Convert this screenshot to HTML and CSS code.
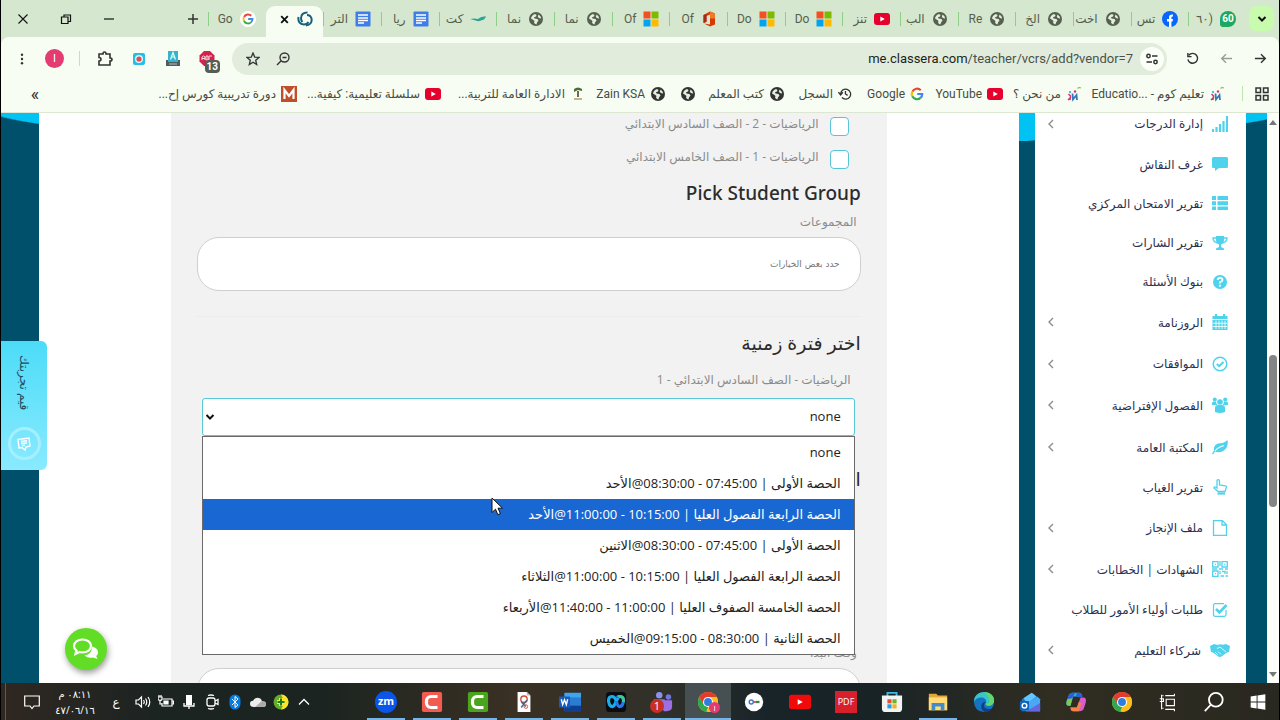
FILE: index.html
```
<!DOCTYPE html>
<html lang="ar" dir="rtl">
<head>
    <meta charset="UTF-8">
    <meta name="viewport" content="width=device-width, initial-scale=1.0">
    <title>Classera</title>
    <link rel="stylesheet" href="styles.css">
</head>
<body>
    <svg class="sprite" aria-hidden="true">
        <symbol id="globe" viewBox="0 0 16 16">
            <circle cx="8" cy="8" r="7" fill="currentColor"/>
            <path d="M3 7.500Q3.500 4 7 3l1.500 1L8 5.500l-2 .7.500 1.300 3 .5 1 1.500L9 11.500 8.500 13.500Q6.500 13 6 11.500L6.500 10 5 8.800zM10.500 3.500Q13 5 13.200 7.500L11.500 7.200 9.800 6z" fill="#e3eedd"/>
        </symbol>
        <symbol id="youtube" viewBox="0 0 16 16">
            <rect x="0" y="2" width="16" height="12" rx="3" fill="#e6002d"/>
            <path d="m6.300 5.500 4.500 2.500-4.500 2.500z" fill="#fff"/>
        </symbol>
        <symbol id="microsoft" viewBox="0 0 16 16">
            <path d="M.5 .5h7v7h-7z" fill="#f25022"/><path d="M8.500 .5h7v7h-7z" fill="#7fba00"/>
            <path d="M.5 8.500h7v7h-7z" fill="#00a4ef"/><path d="M8.500 8.500h7v7h-7z" fill="#ffb900"/>
        </symbol>
        <symbol id="docs" viewBox="0 0 16 16">
            <rect x=".5" y=".5" width="15" height="15" rx="1" fill="#3f7de8"/>
            <path d="M3 4h10M3 7h10M3 9.500h10M3 12h6" stroke="#fff" stroke-width="1.400"/>
        </symbol>
        <symbol id="google" viewBox="0 0 16 16">
            <g fill="none" stroke-width="2.500">
                <path d="M12.300 3.700A6 6 0 0 0 2.700 5.300" stroke="#ea4335"/>
                <path d="M2.700 5.300a6 6 0 0 0 0 5.400" stroke="#fbbc05"/>
                <path d="M2.700 10.700a6 6 0 0 0 9.300 1.800" stroke="#34a853"/>
                <path d="M12 12.500A6 6 0 0 0 14 8H8.300" stroke="#4285f4"/>
            </g>
        </symbol>
        <symbol id="madrasati" viewBox="0 0 16 16">
            <path d="m2.500 8 2 2-.5 4M2 14l3-3" stroke="#d6336c" stroke-width="1.500" fill="none"/>
            <path d="m6.500 7.500.5 6 3.500-4.500.5 5" stroke="#3578b8" stroke-width="1.800" fill="none"/>
            <circle cx="4" cy="6" r="1" fill="#29a3d6"/><circle cx="9" cy="5.500" r="1.200" fill="#d6336c"/>
            <path d="m11.500 2.500 1.500-1 2 .5" stroke="#8dc63f" stroke-width="1.200" fill="none"/>
        </symbol>
        <symbol id="chrome" viewBox="0 0 24 24">
            <circle cx="12" cy="12" r="11" fill="#fbc116"/>
            <path d="M2.500 6.500A11 11 0 0 1 21.500 6.500H12L7 15z" fill="#e33b2e"/>
            <path d="M2.500 6.500 7.200 14.700 12 17.500 10 22.800A11 11 0 0 1 2.500 6.500z" fill="#2da94f"/>
            <path d="M21.500 6.500H12l5 8-5 8.500A11 11 0 0 0 21.500 6.500z" fill="#fbc116"/>
            <circle cx="12" cy="12" r="5.500" fill="#fff"/><circle cx="12" cy="12" r="4.300" fill="#2f7de1"/>
        </symbol>
        <symbol id="camtasia" viewBox="0 0 24 24">
            <rect x="1" y="1" width="22" height="22" rx="2" fill="currentColor"/>
            <path d="M18 6h-7a5 5 0 0 0-5 5v2a5 5 0 0 0 5 5h7" fill="none" stroke="#fff" stroke-width="3.500"/>
        </symbol>
        <symbol id="chevron" viewBox="0 0 8 10">
            <path d="M6 1 2 5l4 4" fill="none" stroke="currentColor" stroke-width="1.400"/>
        </symbol>
    </svg>

    <header class="browser">
        <div class="tab-strip">
            <button class="tab-search" aria-label="Search tabs"><svg viewBox="0 0 12 12"><path d="m2.500 4 3.500 3.500L9.500 4" fill="none" stroke="currentColor" stroke-width="2"/></svg></button>
            <div class="tabs" role="tablist">
                <button class="tab" role="tab"><span class="badge-60">60</span><span class="tab-title">(٦٠</span></button>
                <button class="tab" role="tab"><svg viewBox="0 0 16 16"><circle cx="8" cy="8" r="8" fill="#0866ff"/><path d="M7 16v-5.500H5V8h2V6.500C7 4.300 8.200 3.200 11 3.500v2.100C9.600 5.500 9.400 6 9.400 7v1H11l-.4 2.500H9.400V16z" fill="#fff"/></svg><span class="tab-title">تس</span></button>
                <button class="tab" role="tab"><svg><use href="#globe"/></svg><span class="tab-title">اخت</span></button>
                <button class="tab" role="tab"><svg><use href="#globe"/></svg><span class="tab-title">الخ</span></button>
                <button class="tab" role="tab"><svg><use href="#globe"/></svg><span class="tab-title">Re</span></button>
                <button class="tab" role="tab"><svg><use href="#globe"/></svg><span class="tab-title">الب</span></button>
                <button class="tab" role="tab"><svg><use href="#youtube"/></svg><span class="tab-title">تنز</span></button>
                <button class="tab" role="tab"><svg><use href="#microsoft"/></svg><span class="tab-title">Do</span></button>
                <button class="tab" role="tab"><svg><use href="#microsoft"/></svg><span class="tab-title">Do</span></button>
                <button class="tab" role="tab"><svg viewBox="0 0 16 16"><path d="m9 .5 5 2v11l-5 2-6-3 6 1V3.500L5.500 5v5.500L2.500 12V4z" fill="#d83b01"/><path d="m9 .5 5 2v5H9z" fill="#f0772b"/><path d="M2.500 4 5.500 3v8L2.500 12z" fill="#a52a1c"/></svg><span class="tab-title">Of</span></button>
                <button class="tab" role="tab"><svg><use href="#microsoft"/></svg><span class="tab-title">Of</span></button>
                <button class="tab" role="tab"><svg><use href="#globe"/></svg><span class="tab-title">نما</span></button>
                <button class="tab" role="tab"><svg><use href="#globe"/></svg><span class="tab-title">نما</span></button>
                <button class="tab" role="tab"><svg viewBox="0 0 16 16"><path d="M0 8q4-1 8 0 3-3 7-2.500L16 5q-1 4-5 4.500Q8 11 4 9z" fill="#2aa596"/></svg><span class="tab-title">كت</span></button>
                <button class="tab" role="tab"><svg><use href="#docs"/></svg><span class="tab-title">ريا</span></button>
                <button class="tab" role="tab"><svg><use href="#docs"/></svg><span class="tab-title">التر</span></button>
                <button class="tab active" role="tab" aria-selected="true" aria-label="Classera"><svg viewBox="0 0 16 16" fill="none" stroke="#17607c" stroke-width="2"><path d="M10.500 1.500Q4 1.500 4 7.500q0 2 1.500 3.500"/><path d="M1.500 6q-1 7 5.500 7.500 3 0 4.500-2.500" /><path d="M9 14.500q6.500-1 5.500-7Q13.500 4 10 4"/></svg><svg class="tab-close" viewBox="0 0 10 10"><path d="m2 2 6 6M8 2 2 8" stroke="#111" stroke-width="1.700"/></svg></button>
                <button class="tab" role="tab"><span class="google-disc"><svg><use href="#google"/></svg></span><span class="tab-title">Go</span></button>
            </div>
            <button class="icon-btn" aria-label="New tab"><svg viewBox="0 0 12 12"><path d="M6 1v10M1 6h10" stroke="currentColor" stroke-width="1.500"/></svg></button>
            <div class="window-controls">
                <button class="icon-btn" aria-label="Minimize"><svg viewBox="0 0 12 12"><path d="M1 6h10" stroke="#111" stroke-width="1.200"/></svg></button>
                <button class="icon-btn" aria-label="Restore"><svg viewBox="0 0 12 12" fill="none" stroke="#111" stroke-width="1.200"><path d="M1.500 4h6.500v6.500H1.500zM4 4V2h6.500v6.500H8"/></svg></button>
                <button class="icon-btn" aria-label="Close"><svg viewBox="0 0 12 12"><path d="m1.500 1.500 9 9M10.500 1.500l-9 9" stroke="#111" stroke-width="1.100"/></svg></button>
            </div>
        </div>

        <div class="toolbar">
            <button class="nav-btn" aria-label="Back"><svg viewBox="0 0 14 14"><path d="M1 7h11M7.500 2.300 12.200 7l-4.700 4.700" fill="none" stroke="#333" stroke-width="1.500"/></svg></button>
            <button class="nav-btn" aria-label="Forward"><svg viewBox="0 0 14 14"><path d="M13 7H2M6.500 2.300 1.800 7l4.700 4.700" fill="none" stroke="#999f98" stroke-width="1.500"/></svg></button>
            <button class="nav-btn" aria-label="Reload"><svg viewBox="0 0 14 14"><path d="M3 3.500a5.300 5.300 0 1 1-1 4.500M2 1v4h4" fill="none" stroke="#333" stroke-width="1.500"/></svg></button>
            <div class="address-bar">
                <button class="site-info" aria-label="Site information"><svg viewBox="0 0 14 14" fill="none" stroke="#333" stroke-width="1.500"><circle cx="3.500" cy="4" r="1.700"/><path d="M7 4h5.500M1.500 10H7"/><circle cx="10.500" cy="10" r="1.700"/></svg></button>
                <a class="url" dir="ltr" href="#"><span>me.classera.com</span>/teacher/vcrs/add?vendor=7</a>
                <button class="icon-btn" aria-label="Zoom"><svg viewBox="0 0 14 14" fill="none" stroke="#333" stroke-width="1.400"><circle cx="8.500" cy="5.500" r="4.500"/><path d="M5.200 8.800 1 13M6.500 5.500h4"/></svg></button>
                <button class="icon-btn" aria-label="Bookmark"><svg viewBox="0 0 14 14"><path d="m7 1 1.700 4.100 4.300.3-3.300 2.800 1 4.300L7 10.200l-3.700 2.300 1-4.300L1 5.400l4.300-.3z" fill="none" stroke="#333" stroke-width="1.300"/></svg></button>
            </div>
            <div class="extensions">
                <button class="ext" aria-label="Ad blocker"><svg viewBox="0 0 16 16"><path d="M5 0h6l4.500 4.500v6L11 15H5L.5 10.500v-6z" fill="#d3224e"/><path d="M3 9V6l1.500-1L6 6v3M7 9V5h2v4zm3 0V5h3M3 7.500h3" stroke="#ffd5df" fill="none"/></svg><span class="ext-count">13</span></button>
                <button class="ext" aria-label="Translate"><svg viewBox="0 0 16 16"><path d="M1 9h14v6H1z" fill="#4e5d62"/><path d="M3 0h10v11H3z" fill="#35b5cb"/><path d="m5.500 8.500 2.500-7 2.500 7M6.500 6h3" stroke="#e8ffff" stroke-width="1.200" fill="none"/><path d="M4 13h8" stroke="#b3c0c0"/></svg></button>
                <button class="ext" aria-label="Screen recorder"><svg viewBox="0 0 16 16"><rect x="2" y="2" width="12" height="12" rx="2" fill="#27bde4"/><circle cx="8" cy="8" r="4" fill="#d9f5ff"/><circle cx="8" cy="8" r="2.600" fill="#df4d50"/></svg></button>
                <button class="ext" aria-label="Extensions"><svg viewBox="0 0 16 16"><path d="M2 3h4q0-2 1.500-2T9 3h4v4q2 0 2 1.500T13 10v4H2v-4q2 0 2-1.700T2 6.500z" fill="none" stroke="#333" stroke-width="1.600"/></svg></button>
                <span class="divider"></span>
                <button class="profile" aria-label="Profile">I</button>
                <button class="icon-btn" aria-label="Menu"><svg viewBox="0 0 14 14" fill="#333"><circle cx="7" cy="2" r="1.400"/><circle cx="7" cy="7" r="1.400"/><circle cx="7" cy="12" r="1.400"/></svg></button>
            </div>
        </div>

        <nav class="bookmarks">
            <button class="icon-btn apps" aria-label="Apps"><svg viewBox="0 0 14 14" fill="none" stroke="#333" stroke-width="1.500"><path d="M1 1h4.500v4.500H1zM8.500 1H13v4.500H8.500zM1 8.500h4.500V13H1zM8.500 8.500H13V13H8.500z"/></svg></button>
            <span class="divider"></span>
            <a href="#"><svg><use href="#madrasati"/></svg><span>تعليم كوم - Educatio...&lrm;</span></a>
            <a href="#"><svg><use href="#madrasati"/></svg><span>من نحن ؟</span></a>
            <a href="#"><svg><use href="#youtube"/></svg><span>YouTube</span></a>
            <a href="#"><svg class="small"><use href="#google"/></svg><span>Google</span></a>
            <a href="#"><svg class="small" viewBox="0 0 16 16" fill="none" stroke="#333" stroke-width="1.500"><path d="M3 8a5.700 5.700 0 1 1 1.500 4M.5 6 3 9l2.500-3M8.500 4.500V8l2.500 1.500"/></svg><span>السجل</span></a>
            <a href="#"><svg><use href="#globe"/></svg><span>كتب المعلم</span></a>
            <a href="#" aria-label="Bookmark"><svg><use href="#globe"/></svg></a>
            <a href="#"><svg><use href="#globe"/></svg><span>Zain KSA</span></a>
            <a href="#"><svg viewBox="0 0 16 16"><path d="M4 3q4-3 8 0v2L8 4 4 6z" fill="#4b6e36"/><path d="M7 5h2v6H7z" fill="#6c665b"/><path d="M4 13h8" stroke="#c5b38d" stroke-width="2"/></svg><span>الادارة العامة للتربية...</span></a>
            <a href="#"><svg><use href="#youtube"/></svg><span>سلسلة تعليمية: كيفية...</span></a>
            <a href="#"><svg viewBox="0 0 16 16"><path d="M0 0h16v16H0z" fill="#c04e2b"/><path d="M3.500 13V4L8 10l4.500-6v9" fill="none" stroke="#fff" stroke-width="2.200"/></svg><span>دورة تدريبية كورس إح...</span></a>
            <button class="more" aria-label="More bookmarks">»</button>
        </nav>
    </header>

    <div class="viewport">
        <div class="page">
            <aside class="sidebar">
                <ul>
                    <li class="parent"><a href="#"><svg viewBox="0 0 16 16"><path d="M1 16v-3M4.500 16v-5M8 16V8M11.500 16V5M15 16V0" stroke="currentColor" stroke-width="2.200"/></svg><span>إدارة الدرجات</span><svg class="arrow"><use href="#chevron"/></svg></a></li>
                    <li><a href="#"><svg viewBox="0 0 16 16"><path d="M1.500 1h13Q16 1 16 2.500v8q0 1.500-1.500 1.500H7l-4 3v-3H1.500Q0 12 0 10.500v-8Q0 1 1.500 1z" fill="currentColor"/></svg><span>غرف النقاش</span></a></li>
                    <li><a href="#"><svg viewBox="0 0 16 16"><path d="M0 1h4v4H0zm5.500 0H16v4H5.500zM0 6.200h4v4H0zm5.500 0H16v4H5.500zM0 11.500h4V15H0zm5.500 0H16V15H5.500z" fill="currentColor"/></svg><span>تقرير الامتحان المركزي</span></a></li>
                    <li><a href="#"><svg viewBox="0 0 16 16"><path d="M4 1h8v4q0 3-3 4.500v2.500l3 1.500V15H4v-1.500L7 12V9.500Q4 8 4 5z" fill="currentColor"/><path d="M4.500 3H1q0 4 4.500 5M11.500 3H15q0 4-4.500 5" fill="none" stroke="currentColor" stroke-width="1.300"/></svg><span>تقرير الشارات</span></a></li>
                    <li><a href="#"><svg viewBox="0 0 16 16"><circle cx="8" cy="8" r="7" fill="currentColor"/><path d="M5.700 6q0-2.200 2.400-2.200T10.500 6Q10.500 7.200 8 8.200V9.500M8 10.700v2" fill="none" stroke="#fff" stroke-width="1.800"/></svg><span>بنوك الأسئلة</span></a></li>
                    <li class="parent"><a href="#"><svg viewBox="0 0 16 16"><path d="M.5 2h15v3H.5zM3 0h2v3H3zM11 0h2v3h-2zM.5 6h15v10H.5z" fill="currentColor"/><path d="M1 9.300h14M1 12.500h14M4 6.500V15M7 6.500V15M10 6.500V15M13 6.500V15" stroke="#fff" stroke-width=".8"/></svg><span>الروزنامة</span><svg class="arrow"><use href="#chevron"/></svg></a></li>
                    <li class="parent"><a href="#"><svg viewBox="0 0 16 16" fill="none" stroke="currentColor"><circle cx="8" cy="8" r="6.800" stroke-width="1.500"/><path d="m4.800 8 2.400 2.200L11.500 6" stroke-width="2"/></svg><span>الموافقات</span><svg class="arrow"><use href="#chevron"/></svg></a></li>
                    <li class="parent"><a href="#"><svg viewBox="0 0 16 16" fill="currentColor"><circle cx="2.800" cy="2.500" r="2"/><circle cx="13.200" cy="2.500" r="2"/><circle cx="8" cy="5" r="2.800"/><path d="M3 15v-4q0-3 3-3h4q3 0 3 3v4q-5 2-10 0zM0 8V6q0-1.500 2-1.500h2q0 2 1.500 3.500zM16 8V6q0-1.500-2-1.500h-2Q12 6.500 10.500 8z"/></svg><span>الفصول الإفتراضية</span><svg class="arrow"><use href="#chevron"/></svg></a></li>
                    <li class="parent"><a href="#"><svg viewBox="0 0 16 16"><path d="M15.500 1Q17 9 10.500 12.500 6 14 3 12.500L1 15.500 0 14.500 2 11.500Q1 6.500 6 4.500 12 4.500 15.500 1z" fill="currentColor"/><path d="M3 12Q6 8 12 6.500" fill="none" stroke="#fff" stroke-width="1.100"/></svg><span>المكتبة العامة</span><svg class="arrow"><use href="#chevron"/></svg></a></li>
                    <li><a href="#"><svg viewBox="0 0 16 16" fill="none" stroke="currentColor" stroke-width="1.300"><path d="M5 9V2q0-1.300 1.200-1.300T7.500 2v4l6 .8q1 0 1 1.200l-1.500 4.500H6L2 9q0-1.500 1.500-1z"/><path d="M5.500 14.500H13" stroke-width="2.200"/></svg><span>تقرير الغياب</span></a></li>
                    <li class="parent"><a href="#"><svg viewBox="0 0 16 16" fill="none" stroke="currentColor" stroke-width="1.300"><path d="M1.500 .7h9l4 4v10.600h-13zM10 .7V5h4.500"/></svg><span>ملف الإنجاز</span><svg class="arrow"><use href="#chevron"/></svg></a></li>
                    <li class="parent"><a href="#"><svg viewBox="0 0 16 16" fill="none" stroke="currentColor" stroke-width="1.300"><path d="M.7 .7H6V6H.7zM10 .7h5.300V6H10zM.7 10H6v5.300H.7zM3 3.300h1M12.200 3.300h1M3 12.700h1M8 0v5M0 8h5M7 8h4M13 8h3M8 10v3M10 10.500h3V13M8.500 15H12M15 10v3M13.500 15H16"/></svg><span>الشهادات | الخطابات</span><svg class="arrow"><use href="#chevron"/></svg></a></li>
                    <li><a href="#"><svg viewBox="0 0 16 16" fill="none" stroke="currentColor"><path d="M14 8v4.500q0 1.800-1.800 1.800H3.300q-1.800 0-1.800-1.800v-9q0-1.800 1.800-1.800H12" stroke-width="1.200"/><path d="m4 7 3.500 3.500L14.500 3" stroke-width="2.600"/></svg><span>طلبات أولياء الأمور للطلاب</span></a></li>
                    <li class="parent"><a href="#"><svg class="wide" viewBox="0 0 20 16"><path d="M0 4 4 2l3.500 1L10 2.300l3 .5L16 2l4 2-1 6-2 .5-5.500 4q-2 1-4-.5L3 10.500 1 10z" fill="currentColor"/><path d="M7 6.500 10 5l6 5M5 10l3 3M8 9.500l3 3" stroke="#fff" stroke-width=".8" fill="none"/></svg><span>شركاء التعليم</span><svg class="arrow"><use href="#chevron"/></svg></a></li>
                </ul>
            </aside>

            <main>
                <form class="panel">
                    <label class="check-row"><input type="checkbox"><span>الرياضيات - 2 - الصف السادس الابتدائي</span></label>
                    <label class="check-row"><input type="checkbox"><span>الرياضيات - 1 - الصف الخامس الابتدائي</span></label>

                    <h2>Pick Student Group</h2>
                    <label class="field-label" for="groups">المجموعات</label>
                    <input class="round-input" type="text" id="groups" placeholder="حدد بعض الخيارات">
                    <hr>

                    <h2>اختر فترة زمنية</h2>
                    <div class="period">
                        <label class="field-label" for="period">الرياضيات - الصف السادس الابتدائي - 1</label>
                        <div class="select-wrap">
                            <select id="period"><option>none</option></select>
                            <svg class="caret" viewBox="0 0 10 10"><path d="m1.500 3 3.500 3.500L8.500 3" fill="none" stroke="#111" stroke-width="2"/></svg>
                            <ul class="options" role="listbox">
                                <li role="option">none</li>
                                <li role="option">الحصة الأولى | 07:45:00 - 08:30:00@الأحد</li>
                                <li role="option" class="highlighted" aria-selected="true">الحصة الرابعة الفصول العليا | 10:15:00 - 11:00:00@الأحد</li>
                                <li role="option">الحصة الأولى | 07:45:00 - 08:30:00@الاثنين</li>
                                <li role="option">الحصة الرابعة الفصول العليا | 10:15:00 - 11:00:00@الثلاثاء</li>
                                <li role="option">الحصة الخامسة الصفوف العليا | 11:00:00 - 11:40:00@الأربعاء</li>
                                <li role="option">الحصة الثانية | 08:30:00 - 09:15:00@الخميس</li>
                            </ul>
                        </div>
                    </div>
                    <h2 class="next-title">ا</h2>
                    <label class="field-label" for="start">وقت البدا</label>
                    <input class="round-input" type="text" id="start">
                </form>
            </main>

            <button class="feedback">
                <span class="feedback-text">قيم تجربتك</span>
                <span class="feedback-icon"><svg viewBox="0 0 16 16" fill="none" stroke="#fff" stroke-width="1.400"><path d="M2 3.500 13 2l1 8-4 1-1 3-3-2.500-3 .5zM5 5.500l6-.7M5 7.500l6-.5M6 9.500l3-.3"/></svg></span>
            </button>
            <button class="chat" aria-label="Chat"><svg viewBox="0 0 28 24"><path d="M20 9.500q6 1.500 6 6 0 2-1.800 3.500l1.300 3-4.500-1.500q-5 1-8.500-2 7.500-1 7.500-9z" fill="#fff"/><path d="M10.500 2.500c-5 0-8.500 2.800-8.500 6.500 0 2 1 3.500 2.500 4.600L3.500 17l4.200-2q1.300.4 2.800.4c5 0 8.500-2.700 8.500-6.400s-3.500-6.500-8.500-6.500z" fill="none" stroke="#fff" stroke-width="2.200"/></svg></button>
            <svg class="pointer" viewBox="0 0 12 20"><path d="M1 1v14.500l3.500-3.300 2.300 5.500 2.600-1.100L7 11.200h4.500z" fill="#fff" stroke="#111"/></svg>
        </div>
        <div class="scrollbar"><span class="scroll-up"></span><span class="thumb"></span><span class="scroll-down"></span></div>
    </div>

    <footer class="taskbar">
        <div class="apps-list">
            <button class="start" aria-label="Start"><svg viewBox="0 0 24 24"><path d="m4 6 6.500-1v6.500H4zM11.500 4.800 20 3.500v8h-8.500zM4 12.500h6.500V19L4 18zM11.500 12.500H20v8l-8.500-1.300z" fill="#fff"/></svg></button>
            <button aria-label="Search"><svg viewBox="0 0 24 24" fill="none" stroke="#fff" stroke-width="2"><circle cx="14" cy="9.500" r="7.500"/><path d="M8.500 15 2 22"/></svg></button>
            <button aria-label="Task view"><svg viewBox="0 0 24 24" fill="none" stroke="#fff" stroke-width="1.200"><path d="M10 9h9v7h-9zM9 5h10V3M9 20h10v2M5 4v16M3 8.500h4v3H3M6 5h1M6 19h1"/></svg></button>
            <button aria-label="Chrome"><svg><use href="#chrome"/></svg></button>
            <button aria-label="Copilot"><svg viewBox="0 0 24 24"><path d="M8 2h8q2 0 3 4H9L6 16H4q-4 0-2-6l2-5q1-3 4-3z" fill="#28a8df"/><path d="M4 5q1-3 4-3h3L7 9 2 11z" fill="#2860d8"/><path d="M2.500 9 8 8l-2 8H4q-4 0-1.500-7z" fill="#7fc94f"/><path d="M16 22H9q-3 0-3-4h7l4-11h3q4 0 2.500 6l-2 6q-1 3-4.500 3z" fill="#d95bce"/><path d="M6 18h7l2-6 3 1-3 9H9q-3 0-3-4z" fill="#f6824b"/><path d="M13 2h3q2 0 3 4l-4 1-3-1z" fill="#2860d8"/></svg></button>
            <button aria-label="Outlook"><svg viewBox="0 0 24 24"><path d="M3 9 14 2l9 7v13H3z" fill="#1877d8"/><path d="m5 8 9-6 5 4L9 14z" fill="#62c6ff"/><path d="m8 14 12-8 3 3v13H8z" fill="#4aa9f4"/><path d="m8 22 15-9v9z" fill="#6667df"/><rect x="1" y="11" width="10" height="10" rx="1" fill="#1265bd"/><circle cx="6" cy="16" r="2.500" fill="none" stroke="#fff" stroke-width="1.600"/></svg></button>
            <button aria-label="Edge"><svg viewBox="0 0 24 24"><circle cx="12" cy="12" r="11" fill="#1473c5"/><path d="M1 12C1 5 6 1 12 1s11 4 11 9c0 4-3 6-6 6-4 0-4-2-2.500-3.500C15 9 12 7 9 7c-4 0-7 2-8 5z" fill="#38c6c8"/><path d="M12 1c7 0 11 4 11 9 0 4-3 6-6 6-2 0-3-1-3-2 6 0 5-7-2-13z" fill="#62d66b"/><path d="M14 12q-5 0-5 5 0 4 4 6 5 0 8-4-8 2-9-3 0-2 2-4z" fill="#123e82"/></svg></button>
            <button class="running" aria-label="Files"><svg viewBox="0 0 24 24"><path d="M2 3h8l2 2h10v16H2z" fill="#e2a83a"/><path d="M2 7h20v14H2z" fill="#ffdc79"/><path d="M5 21v-8h14v8h-4v-4H9v4z" fill="#3f8dcb"/></svg></button>
            <button aria-label="Store"><svg viewBox="0 0 24 24"><path d="M7 6V2h10v4" fill="none" stroke="#43b5e8" stroke-width="2"/><path d="M1 5h22v14q0 4-4 4H5q-4 0-4-4z" fill="#f2f4f4"/><path d="M7 9h4.500v4.500H7z" fill="#e84c31"/><path d="M12.500 9H17v4.500h-4.500z" fill="#6db329"/><path d="M7 14.500h4.500V19H7z" fill="#2a9de0"/><path d="M12.500 14.500H17V19h-4.500z" fill="#f2b418"/></svg></button>
            <button aria-label="PDF"><span class="pdf">PDF</span></button>
            <button aria-label="YouTube"><svg viewBox="0 0 24 24"><rect x="0" y="4" width="24" height="16" rx="3" fill="#f00a0a"/><path d="m9.500 9 5.500 3-5.500 3z" fill="#fff"/></svg></button>
            <button aria-label="Password manager"><svg viewBox="0 0 24 24"><circle cx="12" cy="12" r="10" fill="#fff"/><circle cx="9" cy="12" r="2.200" fill="none" stroke="#3978d2" stroke-width="1.500"/><path d="M11 12h3" stroke="#d34a3a" stroke-width="2"/><path d="M14 12h4" stroke="#44803d" stroke-width="2.500"/></svg></button>
            <button class="running current" aria-label="Chrome window"><svg><use href="#chrome"/></svg><span class="mini-profile">I</span></button>
            <button class="running" aria-label="Teams"><svg viewBox="0 0 24 24"><circle cx="9" cy="4.500" r="3.500" fill="#8c91ec"/><circle cx="19" cy="6.500" r="3" fill="#7474dc"/><path d="M3 9h12v12H6q-3-1-3-5z" fill="#777ae3"/><path d="M14 10h9v7q0 5-6 5h-3z" fill="#9c70e3"/></svg><span class="notice">1</span></button>
            <button class="running" aria-label="Webex"><svg viewBox="0 0 24 24"><rect x="1" y="1" width="22" height="22" rx="4" fill="#090d13"/><path d="M12 10c-1-3-2.500-4-4.500-4C4 6 3.500 9.500 4 12c.7 3.500 2.300 5 4 5 3.500 0 3-7 7-10" fill="none" stroke="#1aaee8" stroke-width="3.400"/><path d="M13 7c1-1 2-1 3.500-1 3.500 0 4 3.500 3.500 6-.7 3.500-2.300 5-4 5-2.500 0-3-3-3.500-6" fill="none" stroke="#2877ee" stroke-width="3.400"/><path d="M14.500 6.500Q15 6 16.500 6C20 6 20.500 9.500 20 12" fill="none" stroke="#34cd91" stroke-width="3.400"/></svg></button>
            <button class="running" aria-label="Word"><svg viewBox="0 0 24 24"><path d="M6 2h18v20H6z" fill="#2b7cd3"/><path d="M6 2h18v5H6z" fill="#41a5ee"/><path d="M6 16h18v6H6z" fill="#103f91"/><path d="M0 6h12v12H0z" fill="#185abd"/><path d="m2.500 9 1.500 6 2-5.500L8 15l1.500-6" fill="none" stroke="#fff" stroke-width="1.500"/></svg></button>
            <button class="running" aria-label="Snip"><svg viewBox="0 0 24 24"><path d="M5 1h10l4 4v18H5z" fill="#fff"/><path d="M15 1v4h4z" fill="#bbb"/><circle cx="12" cy="9" r="3.500" fill="none" stroke="#d04a35" stroke-width="1.500"/><path d="m9 12 5 5M15 10l-6 8" stroke="#436690" stroke-width="1.500"/><circle cx="14" cy="17" r="2" fill="none" stroke="#d04a35"/></svg></button>
            <button class="running green" aria-label="Camtasia"><svg><use href="#camtasia"/></svg></button>
            <button class="running coral" aria-label="Camtasia recorder"><svg><use href="#camtasia"/></svg></button>
            <button class="running" aria-label="Zoom"><span class="zoom-app">zm</span></button>
        </div>
        <div class="tray">
            <button aria-label="Hidden icons"><svg viewBox="0 0 16 16"><path d="m3 10.500 5-5 5 5" fill="none" stroke="#fff" stroke-width="1.300"/></svg></button>
            <button aria-label="Download manager"><svg viewBox="0 0 16 16"><circle cx="8" cy="8" r="7.500" fill="#63ac2c"/><path d="M8 .5a7.500 7.500 0 0 1 0 15q5-7.500 0-15z" fill="#ffe22f"/><path d="M8 4v8M4 8h8" stroke="#f4f12b" stroke-width="4"/><path d="M8 4.500v7M4.500 8h7" stroke="#1e7721" stroke-width="2"/></svg></button>
            <button aria-label="Cloud"><svg viewBox="0 0 16 16"><path d="M4 13q-4 0-4-3.300Q0 7 3 6.800 5 3 9 4q2.500.5 3 3.200Q16 7 16 10t-3 3z" fill="#ececec"/><path d="m5 13 7-6q4 0 4 3t-3 3z" fill="#aaa"/></svg></button>
            <button aria-label="Bluetooth"><svg viewBox="0 0 16 16"><rect x="2.500" y=".5" width="11" height="15" rx="5.500" fill="#087bdc"/><path d="m5 5 6 6-3 2.500v-11L11 5l-6 6" fill="none" stroke="#fff"/></svg></button>
            <button aria-label="Camera"><svg viewBox="0 0 16 16" fill="none" stroke="#fff" stroke-width="1.300"><rect x="3" y="4" width="8" height="8" rx="2"/><path d="m11 7 3-1.500v5L11 9M4 1.500q3-1 6 0M4 14.500q3 1 6 0"/></svg></button>
            <button aria-label="Microphone"><svg viewBox="0 0 16 16"><path d="M5 1h6v10H5z" fill="#fff"/><path d="M3 9v3h10V9M8 12v3" fill="none" stroke="#fff" stroke-width="1.300"/></svg></button>
            <button aria-label="Battery"><svg viewBox="0 0 16 16" fill="none" stroke="#fff" stroke-width="1.200"><path d="M5 5h9v7H4V9M14 7h1.500v3H14M0 3h4v2.500q-2 2-4 0zM1 1v2M3 1v2M2 7v3h2"/><path d="M6 7h4v3H6z" fill="#fff"/></svg></button>
            <button aria-label="Volume"><svg viewBox="0 0 16 16" fill="none" stroke="#fff" stroke-width="1.200"><path d="M1 6h2.500l3-3v10l-3-3H1zM8.500 6q1.500 2 0 4M10.500 4.500q2.500 3.500 0 7M13 3q3.500 5 0 10"/></svg></button>
            <button class="lang">ع</button>
            <div class="clock"><time>٠٨:١١ م</time><time>٤٧/٠٦/١٦</time></div>
            <button aria-label="Notifications"><svg viewBox="0 0 16 16"><path d="M.7 2h14.600v10H10l-2 2.500L6 12H.7z" fill="none" stroke="#fff" stroke-width="1.200"/></svg></button>
        </div>
    </footer>
</body>
</html>
```
FILE: styles.css
```
* {
    box-sizing: border-box;
}

body {
    margin: 0;
    height: 100vh;
    display: flex;
    flex-direction: column;
    padding: 0 1px;
    overflow: hidden;
    background-color: #000;
    font-family: "Open Sans", "Noto Sans", "DejaVu Sans", sans-serif;
    font-size: 12px;
    color: #333;
}

button {
    font-family: inherit;
    font-size: inherit;
    color: inherit;
    background: none;
    border: none;
    padding: 0;
    cursor: pointer;
}

a {
    color: inherit;
    text-decoration: none;
}

ul {
    list-style: none;
    margin: 0;
    padding: 0;
}

svg {
    display: block;
    width: 16px;
    height: 16px;
    flex-shrink: 0;
}

.sprite {
    position: absolute;
    width: 0;
    height: 0;
}

/* browser */
.browser {
    background-color: #d5e7ce;
    flex-shrink: 0;
    font-family: Roboto, "Noto Sans", "DejaVu Sans", sans-serif;
}

.tab-strip {
    display: flex;
    align-items: center;
    height: 37px;
    padding-right: 5px;
}

.tab-search {
    width: 25px;
    height: 25px;
    border-radius: 7px;
    background-color: #c8fbae;
    display: grid;
    place-items: center;
    color: #111;
    margin-left: 3px;
}

.tab-search svg,
.icon-btn svg {
    width: 12px;
    height: 12px;
}

.tabs {
    flex: 1;
    display: grid;
    grid-template-columns: repeat(18, 1fr);
    align-self: stretch;
}

.tab {
    display: flex;
    align-items: center;
    gap: 7px;
    padding: 0 10px 0 6px;
    position: relative;
    color: #56604f;
    min-width: 0;
}

.tab::after {
    content: "";
    position: absolute;
    left: 0;
    top: 12px;
    width: 1px;
    height: 14px;
    background-color: #8fce85;
}

.tab-title {
    white-space: nowrap;
    line-height: 20px;
}

.tab.active {
    background-color: #f7fdf2;
    border-radius: 9px 9px 0 0;
    align-self: end;
    height: 31px;
    padding-bottom: 5px;
}

.tab.active::after {
    display: none;
}

.tab-close {
    width: 11px;
    height: 11px;
}

.badge-60 {
    width: 16px;
    height: 16px;
    flex-shrink: 0;
    border-radius: 8px 8px 8px 3px;
    background-color: #1ba860;
    color: #fff;
    font-size: 10px;
    font-weight: bold;
    line-height: 16px;
    text-align: center;
}

.google-disc {
    width: 16px;
    height: 16px;
    flex-shrink: 0;
    border-radius: 50%;
    background-color: #fff;
    display: grid;
    place-items: center;
}

.google-disc svg {
    width: 12px;
    height: 12px;
}

.icon-btn {
    width: 30px;
    height: 24px;
    display: grid;
    place-items: center;
}

.window-controls {
    display: flex;
    margin-right: 48px;
}

.window-controls .icon-btn {
    width: 43px;
}

.toolbar {
    display: flex;
    align-items: center;
    height: 43px;
    padding-right: 2px;
    background-color: #f7fdf2;
    border-radius: 8px 8px 0 0;
}

.nav-btn {
    width: 34px;
    height: 30px;
    display: grid;
    place-items: center;
}

.nav-btn svg {
    width: 13px;
    height: 13px;
}

.address-bar {
    flex: 1;
    display: flex;
    align-items: center;
    height: 32px;
    margin-right: 8px;
    padding: 0 3px 0 6px;
    border-radius: 16px;
    background-color: #e2ecdd;
}

.address-bar .icon-btn svg {
    width: 14px;
    height: 14px;
}

.site-info {
    width: 24px;
    height: 24px;
    border-radius: 50%;
    background-color: #fafff7;
    display: grid;
    place-items: center;
}

.site-info svg {
    width: 14px;
    height: 14px;
}

.url {
    flex: 1;
    margin-right: 7px;
    text-align: right;
    font-size: 13px;
    color: #4b5347;
}

.url span {
    color: #1b1f19;
}

.extensions {
    display: flex;
    align-items: center;
    padding-left: 6px;
    margin-right: 8px;
}

.ext {
    width: 34px;
    height: 30px;
    display: grid;
    place-items: center;
    position: relative;
}

.ext-count {
    position: absolute;
    right: 4px;
    bottom: 1px;
    padding: 0 2px;
    border-radius: 4px;
    background-color: #555d55;
    color: #fff;
    font-size: 10px;
    font-weight: bold;
    line-height: 13px;
}

.divider {
    width: 1px;
    height: 15px;
    background-color: #bce8b0;
}

.extensions .divider {
    margin: 0 8px 0 15px;
}

.profile {
    width: 19px;
    height: 19px;
    border-radius: 50%;
    background-color: #e23c73;
    color: #fff;
    font-size: 11px;
    margin-left: 8px;
}

.bookmarks {
    display: grid;
    grid-template-columns: 36px 18px 143px 79px 79px 72px 67px 89px 30px 80px 145px 144px 1fr 50px;
    align-items: center;
    height: 33px;
    padding-bottom: 5px;
    background-color: #f7fdf2;
    border-bottom: 1px solid #dde6d2;
}

.bookmarks .apps {
    width: 34px;
}

.bookmarks .apps svg {
    width: 14px;
    height: 14px;
}

.bookmarks a {
    display: flex;
    align-items: center;
    gap: 5px;
    white-space: nowrap;
    color: #474c44;
}

.bookmarks a svg {
    color: #333;
}

.bookmarks .small {
    width: 14px;
    height: 14px;
}

.more {
    font-size: 18px;
    padding-left: 18px;
}

/* page */
.viewport {
    flex: 1;
    display: flex;
    min-height: 0;
}

.page {
    flex: 1;
    display: flex;
    position: relative;
    overflow: hidden;
    padding: 0 21px 0 38px;
    background: radial-gradient(ellipse 660px 42px at 639px -6px, #00c3f3 99%, #00506c 100%);
}

.sidebar {
    width: 211px;
    margin-left: 16px;
    background-color: #fff;
}

.sidebar ul {
    height: 100%;
    display: flex;
    flex-direction: column;
    padding-bottom: 12px;
}

.sidebar li {
    flex: 16;
}

.sidebar .parent {
    flex: 17;
}

.sidebar li:first-child {
    margin-top: -10px;
}

.sidebar a {
    display: flex;
    align-items: center;
    gap: 9px;
    height: 100%;
    padding: 0 18px 0 12px;
    color: #2d3150;
    white-space: nowrap;
}

.sidebar a svg {
    color: #4fd2ec;
}

.sidebar .wide {
    width: 20px;
    margin-right: -2px;
}

.sidebar a .arrow {
    width: 8px;
    height: 10px;
    margin-right: auto;
    color: #8c8c8c;
}

main {
    flex: 1;
    display: flex;
    justify-content: center;
    background-color: #fff;
}

.panel {
    width: 73%;
    height: 650px;
    padding: 0 26px;
    background-color: #f2f2f2;
}

.check-row {
    display: flex;
    align-items: flex-start;
    gap: 11px;
    height: 33px;
    padding-right: 12px;
    color: #8b8b8b;
    line-height: 22px;
}

.check-row input {
    appearance: none;
    width: 19px;
    height: 19px;
    margin: 4px 0 0;
    border: 1px solid #59c3d8;
    border-radius: 4px;
    background-color: #fff;
}

h2 {
    margin: 0;
    font-family: "Noto Sans", "DejaVu Sans", sans-serif;
    font-size: 19px;
    font-weight: 500;
    line-height: 28px;
    color: #2c2c2c;
}

.field-label {
    display: block;
    line-height: 30px;
    padding-right: 4px;
    color: #8b8b8b;
}

.round-input {
    display: block;
    width: 100%;
    height: 54px;
    padding: 0 20px;
    border: 1px solid #cfcfcf;
    border-radius: 22px;
    background-color: #fff;
    font-family: "DejaVu Sans", sans-serif;
    font-size: 9px;
}

.round-input::placeholder {
    color: #777;
}

hr {
    margin: 25px 0 12px;
    border: none;
    border-top: 1px solid #ebebeb;
}

.period {
    padding: 8px 6px 0 5px;
}

.select-wrap {
    position: relative;
    margin-top: 3px;
}

select {
    appearance: none;
    display: block;
    width: 100%;
    height: 38px;
    padding: 0 13px 2px;
    border: 1px solid #58c7d8;
    border-radius: 3px;
    background-color: #fff;
    font-family: inherit;
    font-size: 13px;
    color: #222;
}

.caret {
    position: absolute;
    left: 3px;
    top: 14px;
    width: 10px;
    height: 10px;
}

.options {
    position: absolute;
    top: 100%;
    left: 0;
    right: 0;
    z-index: 1;
    border: 1px solid #696969;
    background-color: #fff;
    font-size: 13px;
    color: #222;
}

.options li {
    height: 31px;
    line-height: 31px;
    padding: 0 13px;
    white-space: nowrap;
}

.options .highlighted {
    background-color: #1967d2;
    color: #fff;
}

.next-title {
    margin: 29px 0 145px;
}

.feedback {
    position: absolute;
    left: 0;
    top: 228px;
    width: 46px;
    height: 129px;
    display: flex;
    flex-direction: column;
    align-items: center;
    justify-content: space-between;
    padding: 14px 0 10px;
    border-radius: 0 6px 6px 0;
    background: linear-gradient(#4cdcf8, #8aeaff);
    color: #234b63;
}

.feedback-text {
    writing-mode: vertical-rl;
}

.feedback-icon {
    width: 33px;
    height: 33px;
    border: 3px solid #a5f0ff;
    border-radius: 50%;
    display: grid;
    place-items: center;
}

.chat {
    position: absolute;
    left: 64px;
    bottom: 13px;
    width: 42px;
    height: 42px;
    border-radius: 50%;
    background-color: #62dd26;
    box-shadow: 1px 3px 6px rgba(0, 0, 0, 0.4);
    display: grid;
    place-items: center;
}

.chat svg {
    width: 28px;
    height: 24px;
}

.pointer {
    position: absolute;
    left: 490px;
    top: 384px;
    z-index: 2;
    width: 12px;
    height: 20px;
}

.scrollbar {
    order: -1;
    width: 12px;
    display: flex;
    flex-direction: column;
    align-items: center;
    padding: 7px 0 6px;
    background-color: #fcfffa;
}

.scroll-up,
.scroll-down {
    border: 4px solid transparent;
}

.scroll-up {
    border-top: none;
    border-bottom: 5px solid #777;
}

.scroll-down {
    border-bottom: none;
    border-top: 5px solid #777;
    margin-top: auto;
}

.thumb {
    width: 8px;
    height: 152px;
    margin-top: 230px;
    border-radius: 4px;
    background-color: #858585;
}

/* taskbar */
.taskbar {
    display: flex;
    justify-content: space-between;
    flex-shrink: 0;
    height: 37px;
    background: linear-gradient(to right, #302721, #1c2422 12%, #1b2420 25%, #3a3024 40%, #30302a 52%, #182429 60%, #182326 68%, #302d21 82%, #292820);
    color: #fff;
}

.apps-list,
.tray {
    display: flex;
}

.apps-list button {
    width: 46px;
    display: grid;
    place-items: center;
    position: relative;
}

.apps-list .start {
    width: 42px;
}

.apps-list svg {
    width: 22px;
    height: 22px;
}

.running::after {
    content: "";
    position: absolute;
    left: 4px;
    right: 4px;
    bottom: 0;
    height: 2px;
    background-color: #76b5e8;
}

.apps-list .current {
    background-color: #465052;
}

.current::after {
    left: 0;
    right: 0;
}

.green {
    color: #4ba51c;
}

.coral {
    color: #f15b50;
}

.pdf {
    width: 22px;
    height: 22px;
    background-color: #d81f2c;
    color: #fff;
    font-size: 9px;
    line-height: 22px;
    text-align: center;
}

.zoom-app {
    width: 22px;
    height: 22px;
    border-radius: 50%;
    background-color: #0b55e8;
    color: #fff;
    font-size: 11px;
    font-weight: bold;
    line-height: 20px;
}

.mini-profile,
.notice {
    position: absolute;
    border-radius: 50%;
    text-align: center;
    color: #fff;
}

.mini-profile {
    right: 11px;
    bottom: 7px;
    width: 11px;
    height: 11px;
    font-size: 8px;
    line-height: 11px;
    background-color: #e23c73;
}

.notice {
    left: 11px;
    bottom: 7px;
    width: 14px;
    height: 14px;
    font-size: 11px;
    line-height: 14px;
    background-color: #c92e22;
}

.tray {
    align-items: center;
    padding-left: 7px;
    border-left: 1px solid #5d5a54;
    margin-left: 4px;
}

.tray button {
    width: 22px;
    height: 30px;
    display: grid;
    place-items: center;
    margin-left: 1px;
}

.tray .lang {
    width: 30px;
}

.clock {
    display: flex;
    flex-direction: column;
    align-items: center;
    width: 50px;
    font-size: 10px;
    line-height: 16px;
}

.tray .clock + button {
    width: 36px;
}
```
